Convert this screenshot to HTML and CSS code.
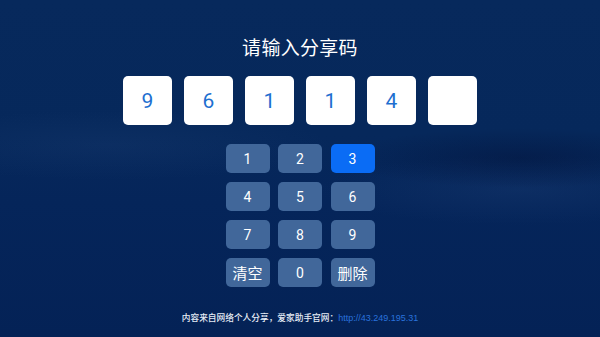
FILE: index.html
```html
<!DOCTYPE html>
<html lang="zh">
<head>
<meta charset="utf-8">
<link rel="stylesheet" href="styles.css">
</head>
<body>
<div class="screen">
  <h1 class="title">请输入分享码</h1>
  <div class="code">
    <div class="cell">9</div>
    <div class="cell">6</div>
    <div class="cell">1</div>
    <div class="cell">1</div>
    <div class="cell">4</div>
    <div class="cell"></div>
  </div>
  <div class="keypad">
    <div class="key">1</div>
    <div class="key">2</div>
    <div class="key active">3</div>
    <div class="key">4</div>
    <div class="key">5</div>
    <div class="key">6</div>
    <div class="key">7</div>
    <div class="key">8</div>
    <div class="key">9</div>
    <div class="key cjk">清空</div>
    <div class="key">0</div>
    <div class="key cjk">删除</div>
  </div>
  <p class="footer">内容来自网络个人分享，爱家助手官网：<span class="link">http://43.249.195.31</span></p>
</div>
</body>
</html>
```

FILE: styles.css
```css
html, body {
  margin: 0;
  padding: 0;
}
body {
  width: 600px;
  height: 337px;
  overflow: hidden;
  font-family: Roboto, "Noto Sans CJK SC", sans-serif;
}
.screen {
  width: 600px;
  height: 337px;
  box-sizing: border-box;
  padding-top: 35px;
  display: flex;
  flex-direction: column;
  align-items: center;
  background:
    radial-gradient(ellipse 220px 35px at 110px 145px, rgba(40, 75, 130, 0.18), rgba(40, 75, 130, 0) 100%),
    radial-gradient(ellipse 180px 30px at 520px 158px, rgba(3, 20, 60, 0.5), rgba(3, 20, 60, 0) 100%),
    radial-gradient(ellipse 200px 35px at 520px 190px, rgba(35, 70, 125, 0.25), rgba(35, 70, 125, 0) 100%),
    linear-gradient(180deg, #07295c 0%, #06285b 40%, #05255a 60%, #042256 100%);
}
.title {
  margin: 0;
  font-family: "Noto Sans CJK SC", sans-serif;
  font-weight: 400;
  font-size: 19px;
  line-height: 24px;
  color: #ffffff;
  letter-spacing: 0.3px;
}
.code {
  margin-top: 17px;
  display: flex;
  gap: 12px;
}
.cell {
  width: 49px;
  height: 49px;
  background: #ffffff;
  border-radius: 5px;
  display: flex;
  align-items: center;
  justify-content: center;
  font-size: 21px;
  color: #1e6fd0;
}
.keypad {
  margin-top: 19px;
  display: grid;
  grid-template-columns: repeat(3, 44px);
  grid-auto-rows: 29px;
  column-gap: 8.5px;
  row-gap: 9px;
}
.key {
  background: #41679a;
  border-radius: 5px;
  color: #ffffff;
  font-size: 14px;
  display: flex;
  align-items: center;
  justify-content: center;
}
.key.active {
  background: #0a6cf5;
}
.key.cjk {
  font-family: "Noto Sans CJK SC", sans-serif;
  font-size: 15px;
}
.footer {
  margin: 25px 0 0;
  font-family: "Noto Sans CJK SC", sans-serif;
  font-weight: 500;
  font-size: 8.7px;
  line-height: 12px;
  color: #e6ecf5;
}
.link {
  font-family: "Liberation Sans", sans-serif;
  font-weight: 400;
  font-size: 9px;
  color: #2a72dc;
}
```
